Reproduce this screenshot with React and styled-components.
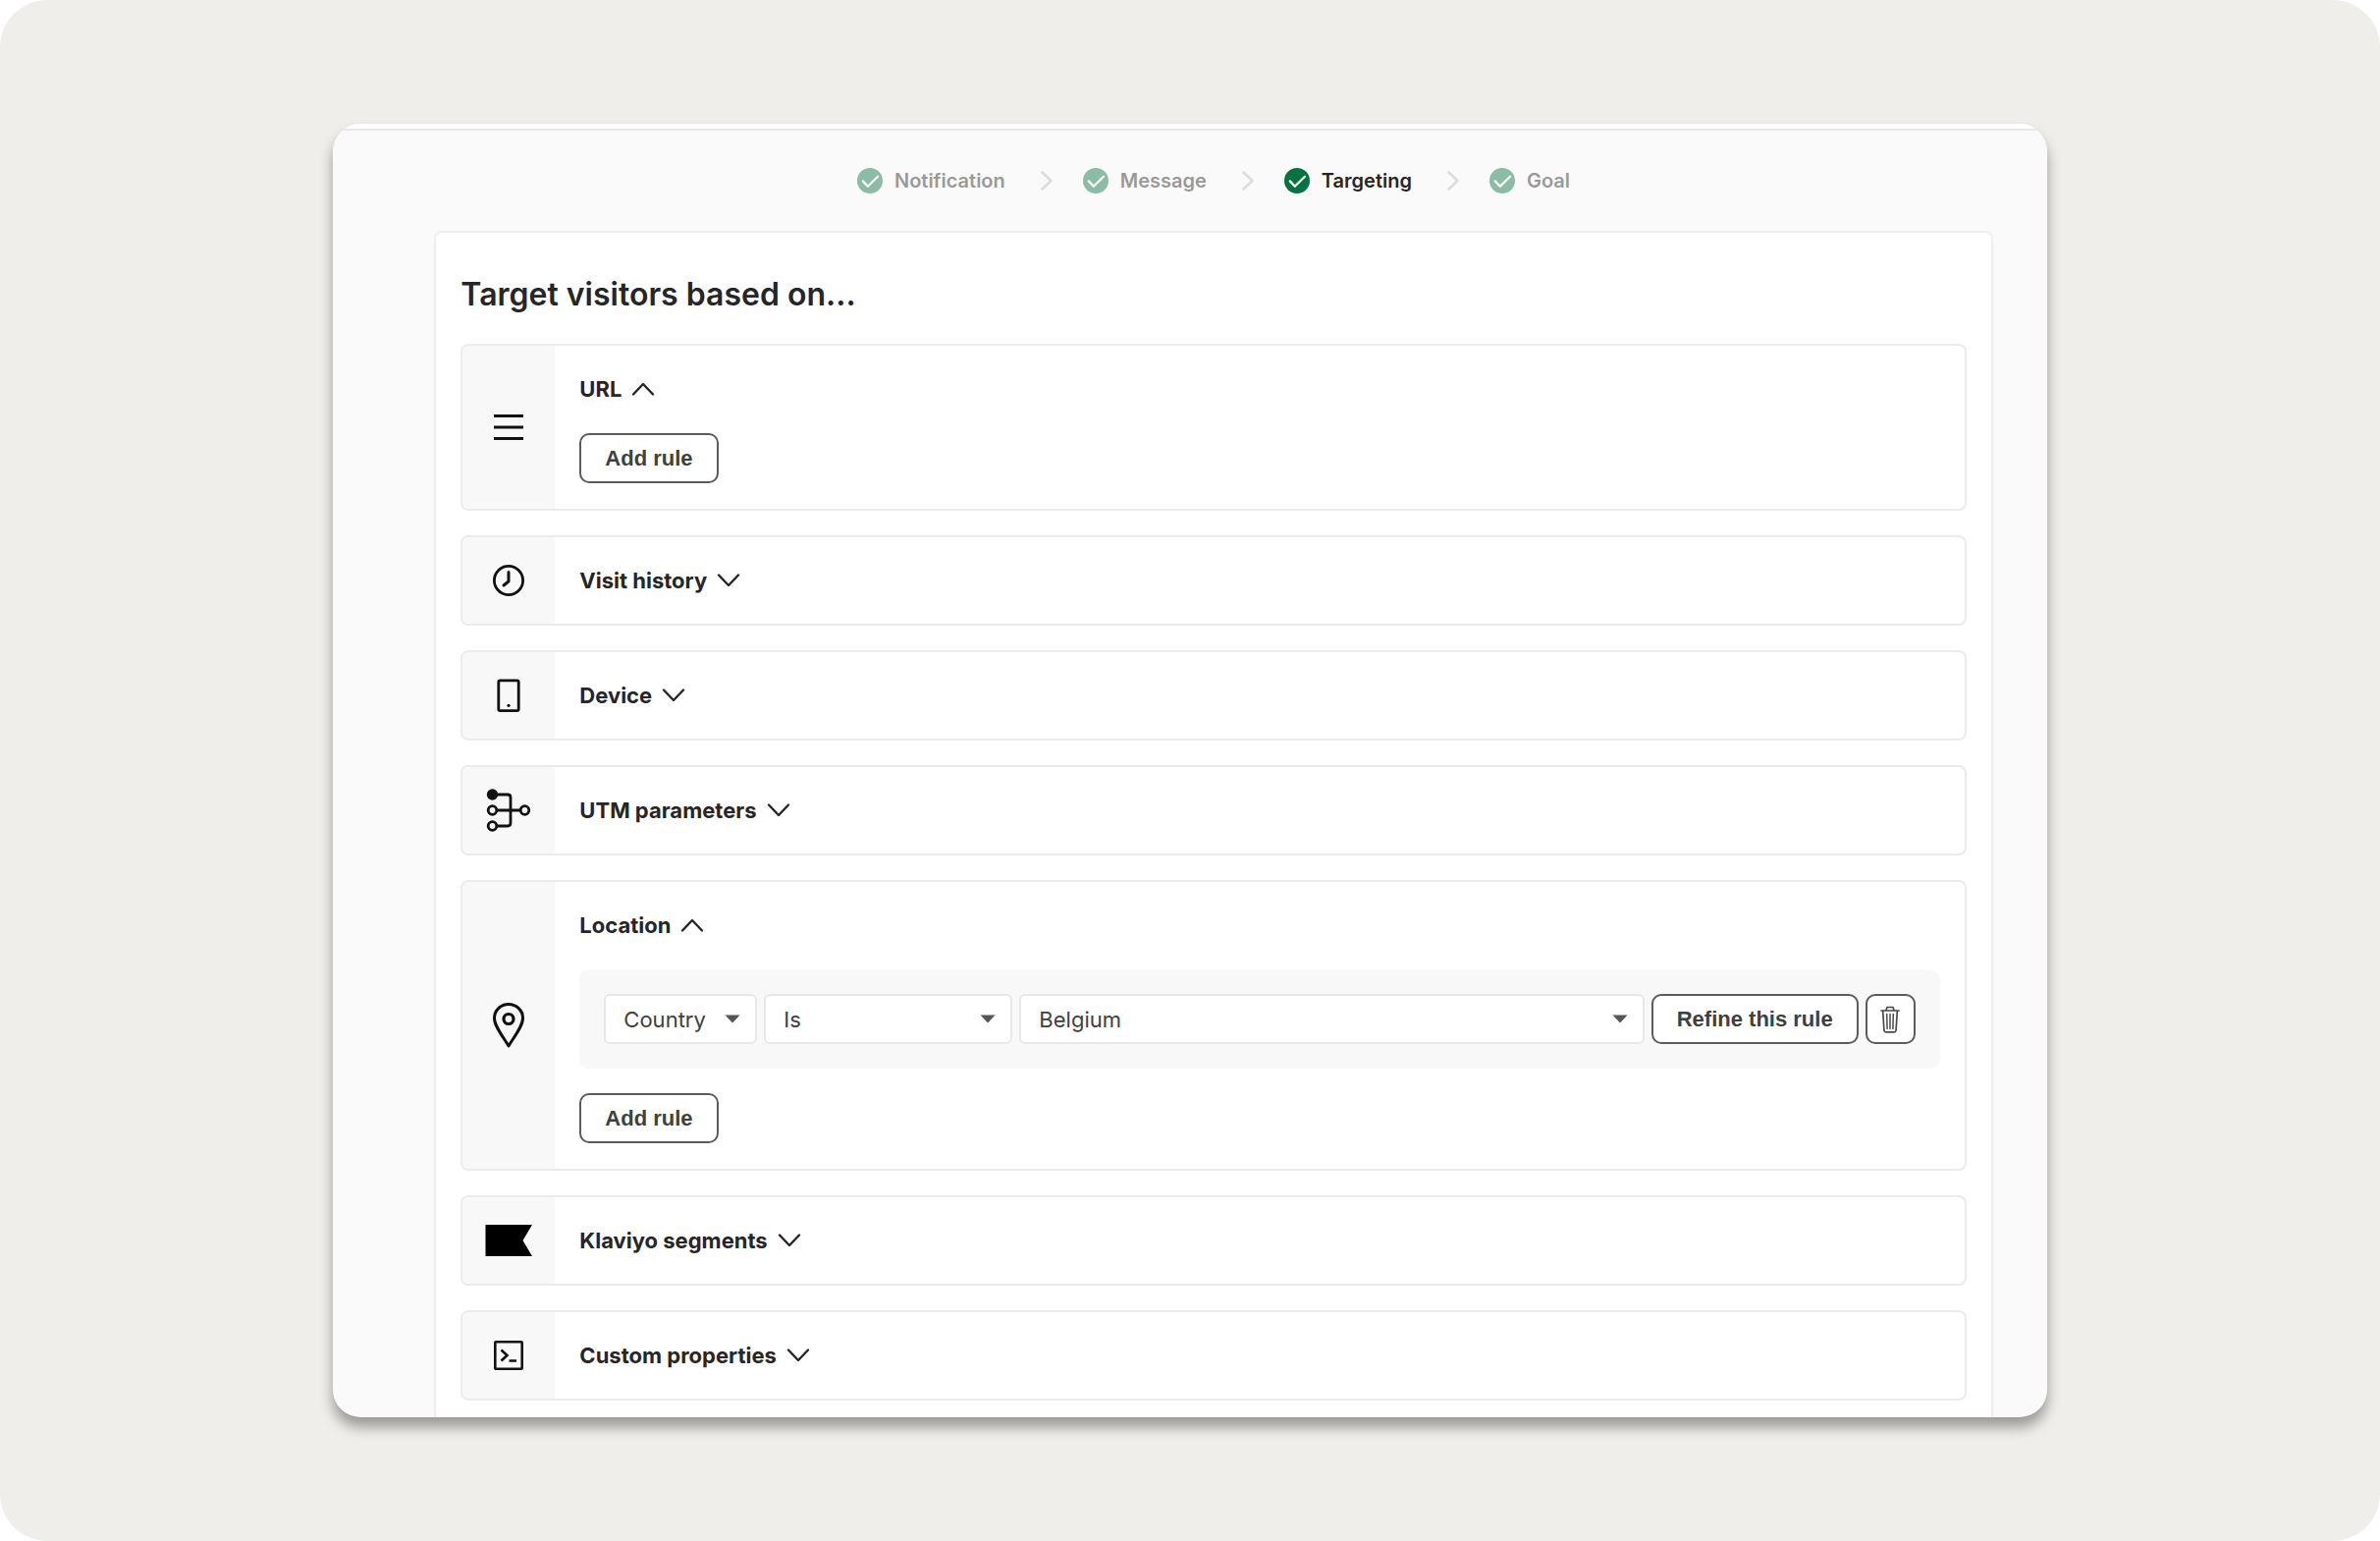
import { createGlobalStyle } from "styled-components";
import styled from "styled-components";

const GlobalStyle = createGlobalStyle`
  * {
    box-sizing: border-box;
  }

  body {
    margin: 0;
    background: #ffffff;
    font-family: Inter, "Liberation Sans", sans-serif;
    color: #262626;
  }
`;

const steps = [
  { name: "Notification" },
  { name: "Message" },
  { name: "Targeting", current: true },
  { name: "Goal" }
];

const CheckCircle = () => (
  <svg width="26" height="26" viewBox="0 0 26 26" fill="none" aria-hidden="true">
    <circle cx="13" cy="13" r="13" fill="#047342" />
    <path d="M5.8 13.4l5 5.4L21 8.8" stroke="#ffffff" strokeWidth="2.3" strokeLinecap="round" strokeLinejoin="round" />
  </svg>
);

const StepArrow = () => (
  <svg width="12" height="20" viewBox="0 0 12 20" fill="none" aria-hidden="true">
    <path d="M1.5 1.5l9 8.5-9 8.5" stroke="#dcdcdc" strokeWidth="2.6" strokeLinecap="round" strokeLinejoin="round" />
  </svg>
);

const Chevron = ({ open }) => (
  <svg width="24" height="14" viewBox="0 0 24 14" fill="none" aria-hidden="true">
    <path
      d={open ? "M2 12.5L12 2l10 10.5" : "M2 1.5L12 12 22 1.5"}
      stroke="#262626"
      strokeWidth="2.4"
      strokeLinecap="round"
      strokeLinejoin="round"
    />
  </svg>
);

const LinesIcon = () => (
  <svg width="32" height="28" viewBox="0 0 32 28" aria-hidden="true">
    <path d="M1 2.5h30M1 14h30M1 25.5h30" stroke="#111111" strokeWidth="3" />
  </svg>
);

const ClockIcon = () => (
  <svg width="32" height="32" viewBox="0 0 32 32" fill="none" aria-hidden="true">
    <circle cx="16" cy="16" r="14.6" stroke="#111111" strokeWidth="2.8" />
    <path d="M16 7.5v9.5l-5 4" stroke="#111111" strokeWidth="3" strokeLinecap="round" strokeLinejoin="round" />
  </svg>
);

const PhoneIcon = () => (
  <svg width="24" height="34" viewBox="0 0 24 34" fill="none" aria-hidden="true">
    <rect x="1.8" y="1.8" width="20.4" height="30.8" rx="1.5" stroke="#111111" strokeWidth="2.8" />
    <circle cx="12" cy="27.3" r="1.6" fill="#111111" />
  </svg>
);

const NodesIcon = () => (
  <svg width="46" height="44" viewBox="0 0 46 44" fill="none" aria-hidden="true">
    <path d="M6.5 6H22q3 0 3 3v26q0 3-3 3H11M11 22h24" stroke="#111111" strokeWidth="2.8" />
    <circle cx="6.5" cy="6" r="5.7" fill="#111111" />
    <circle cx="6.5" cy="22" r="4.3" stroke="#111111" strokeWidth="2.8" />
    <circle cx="6.5" cy="38" r="4.3" stroke="#111111" strokeWidth="2.8" />
    <circle cx="39.5" cy="22" r="4.3" stroke="#111111" strokeWidth="2.8" />
  </svg>
);

const PinIcon = () => (
  <svg width="34" height="46" viewBox="0 0 34 46" fill="none" aria-hidden="true">
    <path
      d="M17 44C11 34 2.5 24 2.5 15.5a14.5 14 0 0 1 29 0C31.5 24 23 34 17 44z"
      stroke="#111111"
      strokeWidth="3"
      strokeLinejoin="round"
    />
    <circle cx="17" cy="16.5" r="5" stroke="#111111" strokeWidth="3.2" />
  </svg>
);

const FlagIcon = () => (
  <svg width="48" height="32" viewBox="0 0 48 32" aria-hidden="true">
    <path d="M0.5 0H48l-9.500 16L48 32H0.500z" fill="#000000" />
  </svg>
);

const TerminalIcon = () => (
  <svg width="30" height="30" viewBox="0 0 30 30" fill="none" stroke="#111111" aria-hidden="true">
    <rect x="1.3" y="1.3" width="27.4" height="27.4" rx="0.8" strokeWidth="2.6" />
    <path d="M7.5 9.5l6 5.5-6 5.5M15.5 20.5H23" strokeWidth="2.6" />
  </svg>
);

const TrashIcon = () => (
  <svg
    width="20"
    height="28"
    viewBox="0 0 20 28"
    fill="none"
    stroke="#4a4a4a"
    strokeLinecap="round"
    strokeLinejoin="round"
    aria-hidden="true"
  >
    <path d="M1 5h18M6 4.5l1-3h6l1 3M2.7 5.5l1.2 19.5q.2 1.8 2 1.8h8.2q1.8 0 2-1.8l1.2-19.5" strokeWidth="1.7" />
    <path d="M6.7 8.5l.4 15M10 8.5v15M13.3 8.5l-.4 15" strokeWidth="1.5" />
  </svg>
);

const Section = ({ title, icon, open, children }) => (
  <Card>
    <IconColumn>{icon}</IconColumn>
    <CardBody $open={open}>
      <SectionToggle type="button" aria-expanded={Boolean(open)}>
        {title}
        <Chevron open={open} />
      </SectionToggle>
      {children}
    </CardBody>
  </Card>
);

const Select = ({ label, value, width }) => (
  <SelectWrapper $width={width}>
    <select aria-label={label} defaultValue={value}>
      <option>{value}</option>
    </select>
    <svg width="16" height="9" viewBox="0 0 16 9" aria-hidden="true">
      <path d="M0.5 0.5h15L8 8.5z" fill="#555555" />
    </svg>
  </SelectWrapper>
);

const App = () => {
  return (
    <Page>
      <GlobalStyle />
      <Window>
        <TopStrip />
        <Steps>
          {steps.map((step, index) => (
            <Step key={step.name}>
              {index > 0 && <StepArrow />}
              <StepLink href="#" $current={step.current} aria-current={step.current ? "step" : undefined}>
                <CheckCircle />
                {step.name}
              </StepLink>
            </Step>
          ))}
        </Steps>

        <Panel>
          <Title>Target visitors based on...</Title>

          <Section title="URL" icon={<LinesIcon />} open>
            <Button type="button">Add rule</Button>
          </Section>
          <Section title="Visit history" icon={<ClockIcon />} />
          <Section title="Device" icon={<PhoneIcon />} />
          <Section title="UTM parameters" icon={<NodesIcon />} />
          <Section title="Location" icon={<PinIcon />} open>
            <Rule>
              <Select label="Location type" value="Country" width="156px" />
              <Select label="Condition" value="Is" width="253px" />
              <Select label="Country" value="Belgium" />
              <Button type="button">Refine this rule</Button>
              <IconButton type="button" aria-label="Delete rule">
                <TrashIcon />
              </IconButton>
            </Rule>
            <Button type="button">Add rule</Button>
          </Section>
          <Section title="Klaviyo segments" icon={<FlagIcon />} />
          <Section title="Custom properties" icon={<TerminalIcon />} />
        </Panel>
      </Window>
    </Page>
  );
};

const Page = styled.div`
  min-height: 100vh;
  padding: 126px 14%;
  border-radius: 48px;
  background: #efeeea;
`;

const Window = styled.main`
  overflow: hidden;
  border-radius: 28px;
  background: #fafafa;
  box-shadow: 0 10px 14px rgba(0, 0, 0, 0.36);
`;

const TopStrip = styled.div`
  height: 7px;
  border-bottom: 2px solid #e8e8e8;
  background: #ffffff;
`;

const Steps = styled.ol`
  display: flex;
  justify-content: center;
  gap: 36px;
  margin: 0;
  padding: 36px 56px 36px 104px;
  list-style: none;
`;

const Step = styled.li`
  display: flex;
  align-items: center;
  gap: 31px;
`;

const StepLink = styled.a`
  display: flex;
  align-items: center;
  gap: 12px;
  font-size: 20px;
  line-height: 30px;
  font-weight: 600;
  color: #262626;
  text-decoration: none;
  opacity: ${({ $current }) => ($current ? 1 : 0.45)};
`;

const Panel = styled.section`
  display: flex;
  flex-direction: column;
  gap: 25px;
  margin: 0 55px 0 103px;
  padding: 37px 25px 17px;
  border: 2px solid #eeeeee;
  border-bottom: 0;
  border-radius: 8px 8px 0 0;
  background: #ffffff;
`;

const Title = styled.h1`
  margin: 0;
  font-size: 32px;
  line-height: 51px;
  font-weight: 600;
`;

const Card = styled.section`
  display: flex;
  overflow: hidden;
  border: 2px solid #ebebeb;
  border-radius: 8px;
`;

const IconColumn = styled.div`
  display: flex;
  flex: none;
  align-items: center;
  justify-content: center;
  width: 94px;
  background: #f8f8f8;
`;

const CardBody = styled.div`
  display: flex;
  flex: 1;
  flex-direction: column;
  align-items: flex-start;
  gap: 25px;
  min-width: 0;
  padding: 24px 25px ${({ $open }) => ($open ? "26px" : "24px")};
`;

const SectionToggle = styled.button`
  display: flex;
  align-items: center;
  gap: 10px;
  padding: 0;
  border: 0;
  background: none;
  font: inherit;
  font-size: 22px;
  line-height: 40px;
  font-weight: 700;
  color: #262626;
  cursor: pointer;
`;

const Button = styled.button`
  flex: none;
  height: 51px;
  padding: 0 24px;
  border: 2px solid #5c5c5c;
  border-radius: 10px;
  background: #ffffff;
  font-family: "Liberation Sans", Arial, sans-serif;
  font-size: 22px;
  font-weight: 700;
  color: #40403c;
  cursor: pointer;
`;

const IconButton = styled(Button)`
  display: flex;
  align-items: center;
  justify-content: center;
  width: 51px;
  padding: 0;
`;

const Rule = styled.div`
  display: flex;
  gap: 7px;
  width: 100%;
  padding: 25px;
  border-radius: 10px;
  background: #f8f8f8;
`;

const SelectWrapper = styled.div`
  position: relative;
  flex: ${({ $width }) => ($width ? `0 0 ${$width}` : "1")};

  select {
    width: 100%;
    height: 51px;
    padding: 0 44px 0 18px;
    appearance: none;
    border: 2px solid #e8e8e8;
    border-radius: 6px;
    background: #ffffff;
    font: inherit;
    font-size: 22px;
    color: #40403c;
  }

  svg {
    position: absolute;
    top: 21px;
    right: 17px;
    pointer-events: none;
  }
`;

export default App;
